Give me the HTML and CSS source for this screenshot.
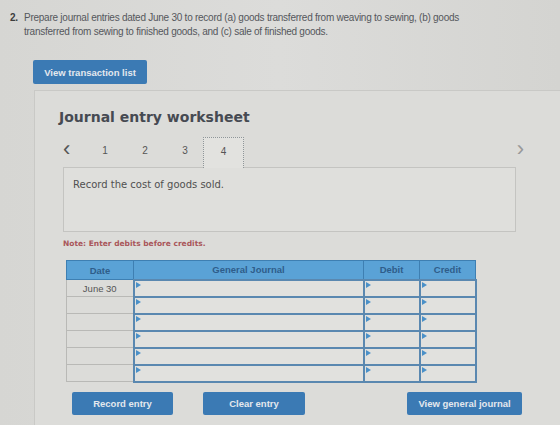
FILE: index.html
```html
<!DOCTYPE html>
<html lang="en">
<head>
    <meta charset="UTF-8">
    <meta name="viewport" content="width=device-width, initial-scale=1.0">
    <title>Journal entry worksheet</title>
    <link rel="stylesheet" href="styles.css">
</head>
<body>
    <div class="question">
        <span class="q-num">2.</span>
        <p>Prepare journal entries dated June 30 to record (a) goods transferred from weaving to sewing, (b) goods transferred from sewing to finished goods, and (c) sale of finished goods.</p>
    </div>

    <button class="btn btn-list">View transaction list</button>

    <section class="worksheet">
        <h2>Journal entry worksheet</h2>

        <div class="tabs">
            <span class="chev">&lsaquo;</span>
            <span class="tab">1</span>
            <span class="tab">2</span>
            <span class="tab">3</span>
            <span class="tab active">4</span>
            <span class="chev chev-right">&rsaquo;</span>
        </div>

        <div class="task">Record the cost of goods sold.</div>

        <p class="note">Note: Enter debits before credits.</p>

        <table class="journal">
            <thead>
                <tr>
                    <th class="c-date">Date</th>
                    <th class="c-acct">General Journal</th>
                    <th class="c-amt">Debit</th>
                    <th class="c-amt">Credit</th>
                </tr>
            </thead>
            <tbody>
                <tr><td class="date">June 30</td><td class="field"></td><td class="field"></td><td class="field"></td></tr>
                <tr><td class="date"></td><td class="field"></td><td class="field"></td><td class="field"></td></tr>
                <tr><td class="date"></td><td class="field"></td><td class="field"></td><td class="field"></td></tr>
                <tr><td class="date"></td><td class="field"></td><td class="field"></td><td class="field"></td></tr>
                <tr><td class="date"></td><td class="field"></td><td class="field"></td><td class="field"></td></tr>
                <tr><td class="date"></td><td class="field"></td><td class="field"></td><td class="field"></td></tr>
            </tbody>
        </table>

        <div class="actions">
            <button class="btn btn-record">Record entry</button>
            <button class="btn btn-clear">Clear entry</button>
            <button class="btn btn-view">View general journal</button>
        </div>
    </section>
</body>
</html>
```

FILE: styles.css
```css
* {
    margin: 0;
    padding: 0;
    box-sizing: border-box;
}

body {
    background: linear-gradient(90deg, #d6d6d3 0%, #dcdcda 50%, #d4d4d1 100%);
    font-family: "Liberation Sans", Arial, sans-serif;
    color: #4a4a4a;
    height: 425px;
    overflow: hidden;
}

.question {
    display: flex;
    padding: 11px 90px 0 10px;
    font-size: 10px;
    letter-spacing: -0.25px;
    line-height: 14px;
    color: #55575c;
}

.q-num {
    width: 14px;
    flex-shrink: 0;
    font-weight: bold;
    color: #3c3c3c;
}

.btn {
    border: none;
    border-radius: 2px;
    background-color: #3b7ab4;
    color: #e4e8ee;
    font-family: "Liberation Sans", Arial, sans-serif;
    font-size: 9.5px;
    font-weight: bold;
    height: 23px;
    cursor: pointer;
}

.btn-list {
    display: block;
    margin: 21px 0 0 33px;
    width: 114px;
    height: 24px;
}

.worksheet {
    margin: 6px 0 0 34px;
    width: 540px;
    height: 340px;
    border: 1px solid #c9c9c6;
    border-right: none;
    background: #dcdcd9;
    padding: 17px 0 0 24px;
}

.worksheet h2 {
    font-family: "DejaVu Sans", Verdana, sans-serif;
    font-size: 14px;
    line-height: 18px;
    color: #464a52;
}

.tabs {
    display: flex;
    align-items: stretch;
    margin: 11px 0 0 4px;
    width: 461px;
    height: 31px;
    font-size: 10px;
    color: #555;
    position: relative;
    z-index: 1;
}

.chev {
    width: 22px;
    font-size: 22px;
    line-height: 24px;
    color: #555;
}

.chev-right {
    margin-left: auto;
    width: auto;
    color: #999;
}

.tab {
    width: 40px;
    padding-top: 8px;
    text-align: center;
}

.tab.active {
    width: 41px;
    margin-left: -2px;
    border: 1px dotted #8f9699;
    border-bottom: none;
    background: #e2e2df;
}

.task {
    margin: -1px 0 0 4px;
    width: 453px;
    height: 65px;
    border: 1px solid #c4c4c1;
    background: #dfdfdc;
    padding: 11px 9px;
    font-family: "DejaVu Sans", Verdana, sans-serif;
    font-size: 10px;
    color: #505050;
}

.note {
    margin: 7px 0 0 4px;
    font-family: "DejaVu Sans", Verdana, sans-serif;
    font-size: 7.5px;
    font-weight: bold;
    color: #a9565a;
}

.journal {
    margin: 12px 0 0 7px;
    width: 410px;
    border-collapse: collapse;
    table-layout: fixed;
}

.journal th {
    height: 19px;
    background: #5aa2d6;
    border: 1px solid #3e7fb2;
    font-size: 9.5px;
    font-weight: bold;
    color: #2f5d8a;
}

.c-date { width: 67px; }
.c-acct { width: 230px; }
.c-amt { width: 56px; }

.journal td {
    height: 17px;
}

.journal td.date {
    border: 1px solid #b9b9b6;
    background: #dcdcd9;
    text-align: center;
    font-size: 9.5px;
    color: #555;
}

.journal td.field {
    border: 2px solid #5a88b0;
    background: #e1e1de;
    position: relative;
}

/* little marker in the corner of each input cell */
.journal td.field::before {
    content: '';
    position: absolute;
    top: 1px;
    left: 1px;
    border-left: 5px solid #4a90c8;
    border-top: 3px solid transparent;
    border-bottom: 3px solid transparent;
}

.actions {
    display: flex;
    margin: 9px 0 0 13px;
}

.btn-record {
    width: 101px;
}

.btn-clear {
    width: 102px;
    margin-left: 30px;
}

.btn-view {
    width: 115px;
    margin-left: 102px;
}
```
